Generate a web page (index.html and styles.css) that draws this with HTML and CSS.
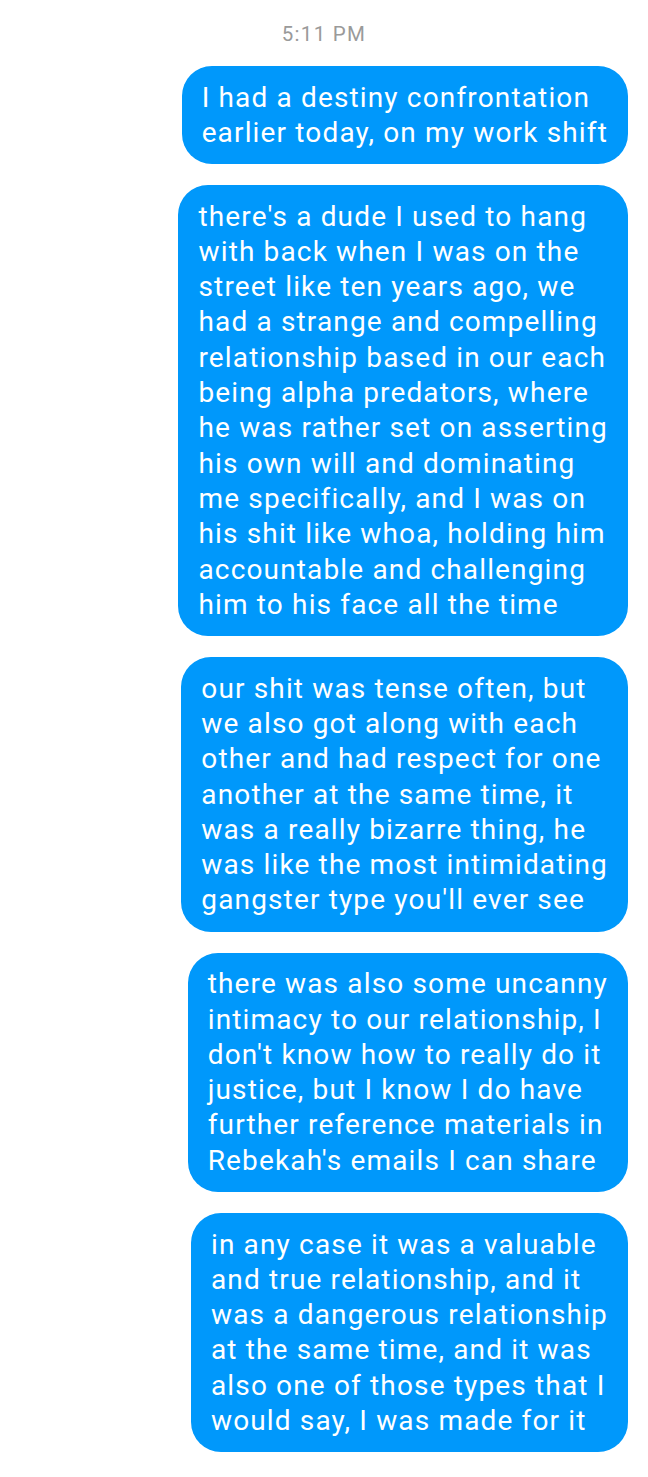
FILE: index.html
```html
<!DOCTYPE html>
<html>
<head>
<meta charset="utf-8">
<link rel="stylesheet" href="styles.css">
</head>
<body>
<div class="thread">
  <div class="time">5:11 PM</div>
  <div class="bubble">I had a destiny confrontation<br>earlier today, on my work shift</div>
  <div class="bubble">there's a dude I used to hang<br>with back when I was on the<br>street like ten years ago, we<br>had a strange and compelling<br>relationship based in our each<br>being alpha predators, where<br>he was rather set on asserting<br>his own will and dominating<br>me specifically, and I was on<br>his shit like whoa, holding him<br>accountable and challenging<br>him to his face all the time</div>
  <div class="bubble">our shit was tense often, but<br>we also got along with each<br>other and had respect for one<br>another at the same time, it<br>was a really bizarre thing, he<br>was like the most intimidating<br>gangster type you'll ever see</div>
  <div class="bubble">there was also some uncanny<br>intimacy to our relationship, I<br>don't know how to really do it<br>justice, but I know I do have<br>further reference materials in<br>Rebekah's emails I can share</div>
  <div class="bubble">in any case it was a valuable<br>and true relationship, and it<br>was a dangerous relationship<br>at the same time, and it was<br>also one of those types that I<br>would say, I was made for it</div>
</div>
</body>
</html>
```

FILE: styles.css
```css
html, body {
  margin: 0;
  padding: 0;
  background: #ffffff;
}
.thread {
  display: flex;
  flex-direction: column;
  align-items: flex-end;
  gap: 21px;
  padding: 22px 20px 0 20px;
  font-family: Roboto, "Noto Sans", sans-serif;
}
.time {
  align-self: center;
  font-size: 20.5px;
  line-height: 24px;
  letter-spacing: 1.3px;
  color: #9a9a9a;
  margin-bottom: -1px;
}
.bubble {
  background: #0098fb;
  color: #ffffff;
  font-size: 28px;
  line-height: 35.3px;
  letter-spacing: 1.15px;
  padding: 13.5px 20px 14px 20px;
  border-radius: 30px;
  white-space: nowrap;
}
```
